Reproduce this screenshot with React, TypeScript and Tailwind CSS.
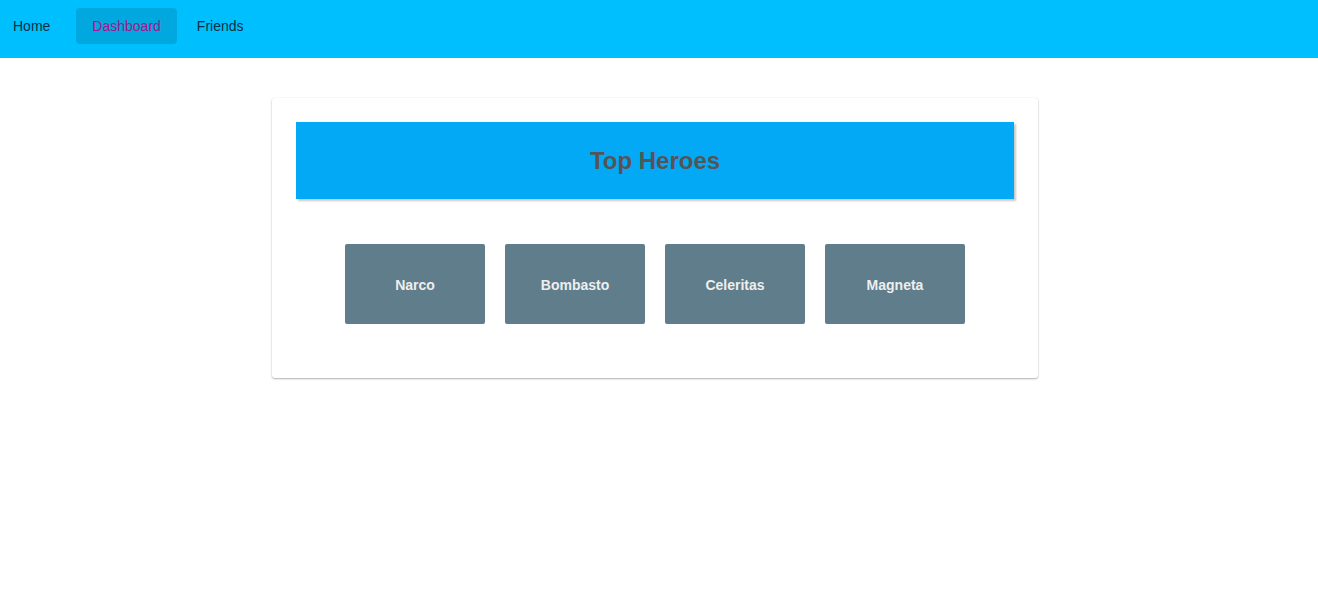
const heroes = ['Narco', 'Bombasto', 'Celeritas', 'Magneta'];

const App = () => {
  return (
    <div className="min-h-screen bg-white font-['Liberation_Sans',Arial,sans-serif]">
      {/* Nav */}
      <nav className="h-[58px] bg-[#00bfff] flex items-start pt-2 text-sm">
        <a className="h-9 flex items-center pl-[13px] pr-[26px] text-[#0d2f44]">Home</a>
        <a className="h-9 flex items-center px-4 rounded bg-[#00a8df] text-[#a5168a]">Dashboard</a>
        <a className="h-9 flex items-center pl-5 pr-4 text-[#0d2f44]">Friends</a>
      </nav>

      {/* Dashboard card */}
      <div className="pt-10 flex justify-center pr-2">
        <div className="w-[766px] bg-white rounded-[3px] p-6 pb-[54px] shadow-[0_1px_2px_rgba(0,0,0,0.3),0_0_2px_rgba(0,0,0,0.06)]">
          <div className="h-[77px] bg-[#03a9f4] flex items-center justify-center shadow-[2px_2px_2px_rgba(0,0,0,0.22)]">
            <h2 className="text-2xl font-bold text-[#555555]">Top Heroes</h2>
          </div>
          <div className="mt-[45px] flex justify-center gap-5">
            {heroes.map((h) => (
              <a
                key={h}
                className="w-[140px] h-20 pt-[2px] rounded-[2px] bg-[#607d8b] flex items-center justify-center text-sm font-bold text-[#eeeeee]"
              >
                {h}
              </a>
            ))}
          </div>
        </div>
      </div>
    </div>
  );
};

export default App;
